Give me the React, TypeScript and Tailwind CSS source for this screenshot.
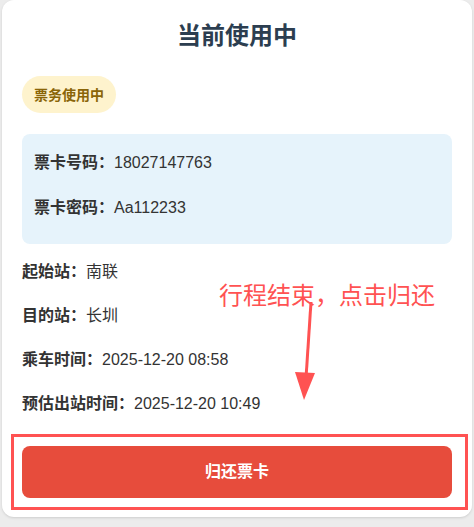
const font = "font-['Liberation_Sans','Noto_Sans_CJK_SC',sans-serif]";

function InfoRow({ label, value }: { label: string; value: string }) {
  return (
    <div className="h-6 flex items-center text-base text-[#333]">
      <span className="font-bold">{label}：</span>
      <span>{value}</span>
    </div>
  );
}

export default function App() {
  return (
    <div className={`w-[474px] h-[527px] bg-[#ececec] px-[2px] ${font}`}>
      <div className="relative w-[470px] h-[517px] bg-white rounded-xl shadow-sm px-5">
        <h2 className="pt-[19px] h-[52px] text-center text-2xl leading-[33px] font-bold text-[#2c3e50]">
          当前使用中
        </h2>

        <div className="mt-6 inline-flex items-center h-[37px] px-3 rounded-full bg-[#fef3cd] text-[#8a6508] text-sm font-bold">
          票务使用中
        </div>

        <div className="mt-[21px] h-[110px] rounded-lg bg-[#e6f3fb] px-3 pt-4 flex flex-col gap-[19px]">
          <div className="h-[26px] flex items-center text-base text-[#333]">
            <span className="font-bold">票卡号码：</span>
            <span>18027147763</span>
          </div>
          <div className="h-[26px] flex items-center text-base text-[#333]">
            <span className="font-bold">票卡密码：</span>
            <span>Aa112233</span>
          </div>
        </div>

        <div className="mt-4 flex flex-col gap-5">
          <InfoRow label="起始站" value="南联" />
          <InfoRow label="目的站" value="长圳" />
          <InfoRow label="乘车时间" value="2025-12-20 08:58" />
          <InfoRow label="预估出站时间" value="2025-12-20 10:49" />
        </div>

        <div className="relative mt-[30px]">
          <button className="w-full h-[52px] rounded-lg bg-[#e74c3c] text-white text-base font-bold">
            归还票卡
          </button>
          <div className="absolute left-[-11px] right-[-16px] top-[-12px] bottom-[-12px] border-[3px] border-[#ff5252] pointer-events-none" />
        </div>

        <div className="absolute left-[217px] top-[280px] text-2xl leading-[32px] text-[#ff5252] whitespace-nowrap">
          行程结束，点击归还
        </div>
        <svg className="absolute left-[288px] top-[300px]" width="30" height="104" viewBox="0 0 30 104">
          <line x1="21" y1="2" x2="16" y2="78" stroke="#ff5252" strokeWidth="3" />
          <polygon points="5,72 25,73 14,100" fill="#ff5252" />
        </svg>
      </div>
    </div>
  );
}
